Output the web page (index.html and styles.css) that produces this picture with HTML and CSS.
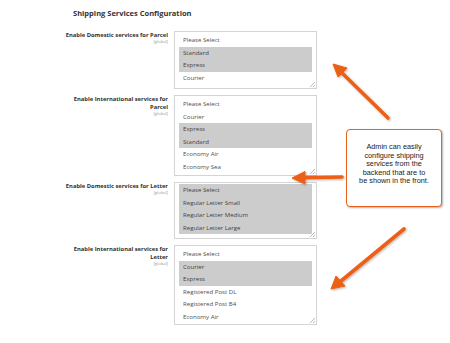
FILE: index.html
```html
<!DOCTYPE html>
<html>
<head>
<meta charset="utf-8">
<link rel="stylesheet" href="styles.css">
</head>
<body>
<div class="page">
  <h2 class="title">Shipping Services Configuration</h2>
  <div class="rows">
    <div class="row">
      <div class="label"><span class="name">Enable Domestic services for Parcel</span><span class="scope">[global]</span></div>
      <div class="select s1">
        <div class="opt">Please Select</div>
        <div class="opt sel">Standard</div>
        <div class="opt sel">Express</div>
        <div class="opt">Courier</div>
        <span class="grip"></span>
      </div>
    </div>
    <div class="row">
      <div class="label"><span class="name">Enable International services for Parcel</span><span class="scope">[global]</span></div>
      <div class="select s2">
        <div class="opt">Please Select</div>
        <div class="opt">Courier</div>
        <div class="opt sel">Express</div>
        <div class="opt sel">Standard</div>
        <div class="opt">Economy Air</div>
        <div class="opt">Economy Sea</div>
        <span class="grip"></span>
      </div>
    </div>
    <div class="row">
      <div class="label"><span class="name">Enable Domestic services for Letter</span><span class="scope">[global]</span></div>
      <div class="select s3">
        <div class="opt sel">Please Select</div>
        <div class="opt sel">Regular Letter Small</div>
        <div class="opt sel">Regular Letter Medium</div>
        <div class="opt sel">Regular Letter Large</div>
        <span class="grip"></span>
      </div>
    </div>
    <div class="row">
      <div class="label"><span class="name">Enable International services for Letter</span><span class="scope">[global]</span></div>
      <div class="select s4">
        <div class="opt">Please Select</div>
        <div class="opt sel">Courier</div>
        <div class="opt sel">Express</div>
        <div class="opt">Registered Post DL</div>
        <div class="opt">Registered Post B4</div>
        <div class="opt">Economy Air</div>
        <span class="grip"></span>
      </div>
    </div>
  </div>

  <svg class="arrows" width="450" height="343" viewBox="0 0 450 343">
    <defs>
      <filter id="sh" x="-20%" y="-20%" width="140%" height="140%">
        <feDropShadow dx="1" dy="1" stdDeviation="0.8" flood-color="#000" flood-opacity="0.3"/>
      </filter>
    </defs>
    <g fill="#ec5f16" stroke="#ec5f16" filter="url(#sh)">
      <line x1="388" y1="118" x2="341" y2="72" stroke-width="3.6" stroke-linecap="round"/>
      <polygon points="333,64 347,68 338,77" stroke-width="1" stroke-linejoin="round"/>
      <line x1="342" y1="177" x2="303" y2="177.6" stroke-width="3.6" stroke-linecap="round"/>
      <polygon points="292,178 305,171.5 305,184" stroke-width="1" stroke-linejoin="round"/>
      <line x1="404" y1="229" x2="341" y2="281" stroke-width="3.6" stroke-linecap="round"/>
      <polygon points="331,289 336,276 345,286" stroke-width="1" stroke-linejoin="round"/>
    </g>
  </svg>

  <div class="callout">Admin can easily<br>configure shipping<br>services from the<br>backend that are to<br>be shown in the front.</div>
</div>
</body>
</html>
```

FILE: styles.css
```css
* { box-sizing: border-box; }
html, body { margin: 0; padding: 0; background: #fff; }
.page {
  position: relative;
  width: 450px;
  height: 343px;
  overflow: hidden;
  font-family: "Open Sans", "Noto Sans", sans-serif;
  color: #333;
}
.title {
  margin: 0;
  padding: 8px 0 0 73px;
  font-size: 7.5px;
  line-height: 10px;
  font-weight: 700;
  color: #333;
}
.rows {
  display: flex;
  flex-direction: column;
  gap: 6px;
  padding-top: 13px;
}
.row {
  display: flex;
  align-items: flex-start;
  gap: 6px;
}
.label {
  width: 168px;
  padding-left: 60px;
  display: flex;
  flex-direction: column;
  align-items: flex-end;
  text-align: right;
}
.name {
  font-size: 5.8px;
  line-height: 8px;
  font-weight: 700;
  color: #303030;
}
.scope {
  font-size: 4.2px;
  line-height: 6px;
  color: #999;
}
.select {
  position: relative;
  width: 143px;
  border: 1px solid #d4d4d4;
  padding: 2px 4px 0 4px;
  background: #fff;
}
.s1 { height: 58px; }
.s2 { height: 81px; }
.s3 { height: 57px; padding-top: 1px; }
.s4 { height: 80px; padding-top: 2px; }
.opt {
  height: 12.5px;
  line-height: 12.5px;
  padding-left: 4px;
  font-size: 6.1px;
  color: #505050;
  white-space: nowrap;
}
.opt.sel { background: #cccccc; color: #444; }
.grip {
  position: absolute;
  right: 1px;
  bottom: 1px;
  width: 5px;
  height: 5px;
  background: linear-gradient(135deg, transparent 45%, #bbb 45%, #bbb 55%, transparent 55%, transparent 72%, #bbb 72%, #bbb 82%, transparent 82%);
}
.arrows {
  position: absolute;
  left: 0;
  top: 0;
  pointer-events: none;
}
.callout {
  position: absolute;
  left: 346px;
  top: 129px;
  width: 96px;
  height: 78px;
  border: 1.5px solid #e8621c;
  border-radius: 4px;
  background: #fff;
  box-shadow: 1px 1px 2px rgba(0,0,0,0.3);
  padding: 13px 2px 0;
  font-family: "Liberation Sans", Arial, sans-serif;
  font-size: 7.3px;
  line-height: 8.6px;
  text-align: center;
  color: #222;
  white-space: nowrap;
}
```
